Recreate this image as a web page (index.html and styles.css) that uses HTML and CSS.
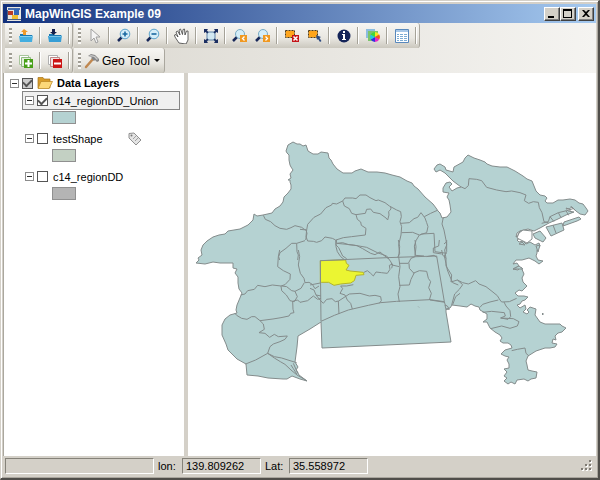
FILE: index.html
```html
<!DOCTYPE html>
<html lang="en">
<head>
<meta charset="utf-8">
<title>MapWinGIS Example 09</title>
<link rel="stylesheet" href="styles.css">
</head>
<body>
<div class="window">
  <header class="titlebar">
    <svg class="app-icon" viewBox="0 0 14 14" aria-hidden="true"><path fill="#e8e6e0" d="M0 0h14v14H0z"/><path fill="#4a70b0" d="M1 1h12v2H1z"/><path fill="#b83c28" d="M1 4h5v4H1z"/><path fill="#3468b8" d="M7 2h5v6H7z"/><path fill="#f0c030" d="M5 8h6v4H5z"/><path fill="#486080" d="M0 12h14v1H0zM0 3h1v10H0z"/></svg>
    <h1 class="title">MapWinGIS Example 09</h1>
    <div class="caption-buttons">
      <button class="caption" aria-label="Minimize"><svg viewBox="0 0 12 10"><path d="M2 7h6v2H2z"/></svg></button>
      <button class="caption" aria-label="Maximize"><svg viewBox="0 0 12 10"><path fill-rule="evenodd" d="M1 0h9v9H1zM2 2v6h7V2z"/></svg></button>
      <button class="caption close" aria-label="Close"><svg viewBox="0 0 12 10"><path d="M2 1h2l2 2 2-2h2L7 4.500l3 3.500H8L6 6 4 8H2l3-3.500z"/></svg></button>
    </div>
  </header>

  <div class="toolbars">
    <div class="toolrow">
      <div class="strip" role="toolbar" aria-label="Project">
        <span class="grip"></span>
        <button class="tool" aria-label="Open"><svg viewBox="0 0 16 16"><path fill="#1879b4" d="M2 6h5l1 1h6v7H2z"/><path fill="#43aee0" d="M1 8h13l1-1-1 7H2z"/><path fill="#86d0f0" d="M2 8h12v1H2z"/><path fill="#f09a28" d="m6 1 4 3H8v3H5V4H3z"/></svg></button>
        <span class="sep"></span>
        <button class="tool" aria-label="Save"><svg viewBox="0 0 16 16"><path fill="#1879b4" d="M2 6h5l1 1h6v7H2z"/><path fill="#369ed6" d="M1 8h13l1-1-1 7H2z"/><path fill="#78c4e8" d="M2 8h12v1H2z"/><path fill="#14204c" d="M5 1h3v3h2L6.500 7 3 4h2z"/></svg></button>
        <span class="sep"></span>
      </div>
      <div class="strip" role="toolbar" aria-label="Map">
        <span class="grip"></span>
        <button class="tool" aria-label="Select"><svg viewBox="0 0 16 16"><path fill="#f4f4f4" stroke="#a0a0a0" d="M4 1v12l3-3 2 5 2-1-2-5h4z"/></svg></button>
        <span class="sep"></span>
        <button class="tool" aria-label="Zoom in"><svg viewBox="0 0 16 16"><path stroke="#182858" stroke-width="2.500" d="m6 9-4 4"/><circle cx="9" cy="6" r="4.800" fill="#d4edf8" stroke="#5ca4cc"/><path stroke="#1868a0" stroke-width="1.600" d="M6.500 6h5M9 3.500v5"/></svg></button>
        <span class="sep"></span>
        <button class="tool" aria-label="Zoom out"><svg viewBox="0 0 16 16"><path stroke="#182858" stroke-width="2.500" d="m6 9-4 4"/><circle cx="9" cy="6" r="4.800" fill="#d4edf8" stroke="#5ca4cc"/><path stroke="#1868a0" stroke-width="1.600" d="M6.500 6h5"/></svg></button>
        <span class="sep"></span>
        <button class="tool" aria-label="Pan"><svg viewBox="0 0 16 16"><path fill="#fff" stroke="#404040" stroke-width=".8" d="M5 15 1 9l-.5-2 1.500-.5L4 9 2 4l1.500-1L6 7 5 2l1.500-1L8.500 6.500 9 1.500l1.500-.5.5 6 1.500-4h1.500v9l-2 4z"/></svg></button>
        <span class="sep"></span>
        <button class="tool" aria-label="Full extent"><svg viewBox="0 0 16 16"><path fill="#d2e8f2" stroke="#5f83a8" d="M4 4h8v8H4z"/><path fill="#1c2f62" d="M1 1h4L4 2.500l1.500 2-1 1-2-1.500L1 5zM15 1v4l-1.500-1-2 1.500-1-1 1.500-2L11 1zM1 15v-4l1.500 1 2-1.500 1 1-1.500 2L5 15zM15 15h-4l1-1.500-1.500-2 1-1 2 1.500 1.500-1z"/></svg></button>
        <span class="sep"></span>
        <button class="tool" aria-label="Previous extent"><svg viewBox="0 0 16 16"><path stroke="#182858" stroke-width="2.500" d="m5 9-4 4"/><circle cx="8" cy="6" r="4.500" fill="#d4edf8" stroke="#78aac4"/><path fill="#f09820" d="M8 7h7v7H8z"/><path fill="none" stroke="#fff" stroke-width="1.300" d="m12.500 8.500-2 2 2 2"/></svg></button>
        <button class="tool" aria-label="Next extent"><svg viewBox="0 0 16 16"><path stroke="#182858" stroke-width="2.500" d="m5 9-4 4"/><circle cx="8" cy="6" r="4.500" fill="#d4edf8" stroke="#78aac4"/><path fill="#f09820" d="M8 7h7v7H8z"/><path fill="none" stroke="#fff" stroke-width="1.300" d="m10.500 8.500 2 2-2 2"/></svg></button>
        <span class="sep"></span>
        <button class="tool" aria-label="Clear selection"><svg viewBox="0 0 16 16"><path fill="#ffa51c" stroke="#4c3c20" stroke-dasharray="2 1" d="M1.500 2.500h9v7h-9z"/><path fill="#c41418" d="M8 7h7v7H8z"/><path stroke="#fff" stroke-width="1.500" d="m9.500 8.500 4 4m0-4-4 4"/></svg></button>
        <button class="tool" aria-label="Select shapes"><svg viewBox="0 0 16 16"><path fill="#ffa51c" stroke="#4c3c20" stroke-dasharray="2 1" d="M1.500 2.500h9v7h-9z"/><path fill="#2c4a80" d="m9 7 5 2-1.500 1 2 3-1.500 1-2-3-1 1z"/></svg></button>
        <span class="sep"></span>
        <button class="tool" aria-label="Identify"><svg viewBox="0 0 16 16"><circle cx="8" cy="8" r="6.500" fill="#142458"/><path fill="#fff" d="M7 3h2v2H7zM6 6h3v5h1v1H6v-1h1V7H6z"/></svg></button>
        <span class="sep"></span>
        <button class="tool" aria-label="Symbology"><svg viewBox="0 0 16 16"><path fill="#8cbde0" d="M1 1h9v9H1z"/><path fill="#7cc46c" d="M3 3h10v10H3z"/><g transform="translate(10 9)"><path fill="#f8e820" d="M0 0V-5A5 5 0 0 1 4.300-2.500z"/><path fill="#f85020" d="M0 0 4.300-2.500A5 5 0 0 1 4.300 2.500z"/><path fill="#e828c8" d="M0 0 4.300 2.500A5 5 0 0 1 0 5z"/><path fill="#3030e0" d="M0 0v5a5 5 0 0 1-4.300-2.500z"/><path fill="#20c8e8" d="M0 0-4.300 2.500a5 5 0 0 1 0-5z"/><path fill="#40d838" d="M0 0-4.300-2.500A5 5 0 0 1 0-5z"/></g></svg></button>
        <span class="sep"></span>
        <button class="tool" aria-label="Attribute table"><svg viewBox="0 0 16 16"><path fill="#fff" stroke="#5888bc" d="M1.500 1.500h13v13h-13z"/><path fill="#a8c8e8" d="M2 2h12v2H2z"/><path stroke="#7cacd4" d="M3 6.500h10M3 8.500h10M3 10.500h10M3 12.500h10"/><path stroke="#fff" d="M5.500 5v9M9.500 5v9"/></svg></button>
        <span class="sep"></span>
      </div>
    </div>
    <div class="toolrow">
      <div class="strip" role="toolbar" aria-label="Layers">
        <span class="grip"></span>
        <button class="tool" aria-label="Add layer"><svg viewBox="0 0 16 16"><path fill="#fff" stroke="#a8c49c" d="M1.500 2.500h9v9h-9z"/><path fill="#e4eedd" stroke="#90b880" d="M3.500 4.500h9v9h-9z"/><path fill="#48a018" d="M6 6h9v9H6z"/><path stroke="#fff" stroke-width="2" d="M7 10.500h7M10.500 7v7"/></svg></button>
        <span class="sep"></span>
        <button class="tool" aria-label="Remove layer"><svg viewBox="0 0 16 16"><path fill="#fff" stroke="#b0b0b0" d="M1.500 2.500h9v9h-9z"/><path fill="#f0e4e4" stroke="#c08888" d="M3.500 4.500h9v9h-9z"/><path fill="#cc1414" d="M6 6h9v9H6z"/><path stroke="#fff" stroke-width="2" d="M7 10.500h7"/></svg></button>
        <span class="sep"></span>
      </div>
      <div class="strip" role="toolbar" aria-label="Geoprocessing">
        <span class="grip"></span>
        <button class="menu-tool"><svg class="hammer" viewBox="0 0 16 16"><path stroke="#c08850" stroke-width="2.500" stroke-linecap="round" d="m9 6-7 8"/><path fill="#858585" d="m4 3 3-2 4 1 4 4v2l-2 1-2-2-1 1-3-3 1-1z"/><path fill="#c8c8c8" d="m5 3 2-1 4 1 3 3-1 1-3-3z"/></svg>Geo Tool<span class="arrow"></span></button>
      </div>
    </div>
  </div>

  <main class="workspace">
    <aside class="legend">
      <div class="group">
        <button class="toggle" aria-label="Collapse Data Layers"></button>
        <input class="check mixed" type="checkbox" id="all" checked>
        <svg class="folder" viewBox="0 0 16 14" aria-hidden="true"><path fill="#d89c28" stroke="#a87418" stroke-width=".7" d="M1 3V1.500h5L7 3h6v9H1z"/><path fill="#fcd878" stroke="#b88420" stroke-width=".7" d="M4 5.500h11.500L12 12.500H1z"/></svg>
        <label for="all">Data Layers</label>
      </div>
      <ul class="layers">
        <li>
          <div class="layer selected"><button class="toggle" aria-label="Collapse layer"></button><input class="check" type="checkbox" id="l1" checked><label for="l1">c14_regionDD_Union</label></div>
          <span class="swatch water"></span>
        </li>
        <li>
          <div class="layer"><button class="toggle" aria-label="Collapse layer"></button><input class="check" type="checkbox" id="l2"><label for="l2">testShape</label>
            <svg class="tag" viewBox="0 0 14 14" aria-hidden="true"><path fill="#e4e4e4" stroke="#909090" d="M1 1.500 6 1l7 7-5 5-7-7z"/><path stroke="#a0a0a0" d="m5 7 3-3M7 9l3-3"/><circle cx="3.500" cy="3.500" r="1" fill="#777"/></svg></div>
          <span class="swatch sage"></span>
        </li>
        <li>
          <div class="layer"><button class="toggle" aria-label="Collapse layer"></button><input class="check" type="checkbox" id="l3"><label for="l3">c14_regionDD</label></div>
          <span class="swatch gray"></span>
        </li>
      </ul>
    </aside>
    <div class="splitter"></div>
    <section class="map" aria-label="Map">
      <svg viewBox="188 73 408 382" preserveAspectRatio="xMinYMin meet">
        <path class="land" d="M196 263L199 260 198 258 202 255 201 250 203 245 207 241 213 237 219 235 225 234 228 231 240 229 248 225 253 220 254 214 257 216 263 215 272 213 275 209 280 206 283 202 284 197 288 193 291 189 291 185 290 182 290 180 288 180 291 178 290 174 293 170 291 167 290 165 289 160 289 155 287 153 286 151 288 145 293 142 297 144 300 144 303 146 306 145 308 151 313 154 318 154 321 152 328 153 329 158 331 160 333 164 337 169 343 173 352 173 355 171 361 169 368 172 377 172 385 173 392 175 400 177 407 181 412 183 414 186 418 189 425 197 433 204 436 208 438 211 440 213 442 218 447 217 451 212 450 205 449 200 447 197 449 193 443 192 443 188 446 183 450 182 452 184 449 187 452 191 457 188 461 187 453 181 445 173 440 170 436 172 434 169 437 165 440 164 445 167 446 170 453 172 454 167 463 162 465 158 468 155 474 158 480 160 485 162 487 164 492 166 500 167 507 167 515 171 523 176 527 179 532 181 534 186 536 191 540 195 545 196 547 198 545 201 547 203 553 203 558 200 563 200 570 199 575 200 579 203 583 204 586 208 588 211 585 215 580 214 576 211 572 207 569 209 566 208 568 211 574 212 566 215 558 219 549 223 540 228 534 231 528 229 520 231 517 233 516 237 520 234 524 232 523 236 517 240 519 242 523 241 526 244 530 242 535 245 539 243 540 246 537 250 537 253 536 256 538 260 543 261 539 264 535 261 529 258 522 260 516 260 513 264 517 263 519 266 513 269 518 270 521 267 524 274 522 278 523 282 527 286 524 289 522 291 519 290 515 293 518 296 524 296 528 297 525 300 522 301 520 304 517 305 520 308 525 305 526 309 523 312 527 314 529 312 527 310 530 307 536 309 535 315 540 322 545 324 560 324 562 326 566 328 562 332 558 333 555 336 556 340 553 339 552 343 557 344 555 347 550 348 545 348 536 351 528 356 526 361 527 365 528 370 532 371 537 372 536 378 531 379 528 381 524 379 517 380 515 384 511 382 508 384 504 381 507 378 504 376 507 372 504 369 509 368 509 364 507 360 509 357 505 356 501 354 505 350 512 348 511 345 508 343 503 343 500 341 502 338 500 335 495 332 490 328 487 322 483 322 487 319 487 314 480 310 479 307 475 306 471 304 467 307 460 306 452 305 450 308 446 309 446 312 451 342 322 348 321 322 310 329 298 336 297 347 295 362 298 367 296 370 299 375 307 381 300 379 292 376 287 379 283 379 268 378 258 376 247 375 246 364 237 359 228 350 226 344 222 335 222 325 225 319 230 315 237 313 236 310 237 305 242 293 239 289 238 283 238 277 235 273 237 269 233 268 233 263 228 263 220 263 213 262 205 264z"/>
        <path class="land" d="M546 227L562 223 564 230 551 236zM553 225L556 233M564 222L579 217 581 219 577 221 563 226zM533 234L540 231 546 238 543 242 535 238zM520 231L526 232 523 236 518 235zM536 246L540 245 538 252zM519 244L522 242 525 245zM513 269L519 266 523 269zM542 314L543 313 543 315z"/>
        <path class="bay" d="M519 233L523 230 532 231 532 239 527 243 521 240 517 238z"/>
        <g transform="translate(185 130) scale(.333333)">
          <path class="border" d="M235 256L241 268 257 275 270 287 285 295 305 298 318 293 330 287 350 292 358 298 363 300 366 310 362 330M335 340L320 340 303 355 285 368 281 380 284 390M335 340L336 365 340 375 338 390M335 340L360 332"/>
        </g>
        <g transform="translate(300 130) scale(.333333)">
          <path class="border" d="M0 298L20 300 23 283 42 262 62 252 78 233 95 225 97 220 110 222 128 213 135 204 158 204 168 206 180 195 198 195 210 203 228 212 235 210 255 218 268 228 290 240 302 245 304 260 300 275 305 290 303 315 296 345 299 370 293 382M20 300L18 320 23 333 40 334 50 337 65 332 75 321 97 325 107 330 108 350 112 365 122 380 132 388M128 213L133 228 148 236 155 250 168 254 196 250 200 238 212 237 220 247 240 251 258 264 263 270 267 255 266 245 273 237 272 230M168 254L172 268 182 276 184 286 198 295 196 315 155 320 130 323 108 330M110 340L128 338 146 344 171 347 188 356 212 370 225 374 240 366 252 376 265 386M303 280L328 278 342 266 353 262 363 248 375 264 380 278 384 290 380 308 358 315 338 307 305 308M373 260L392 250 412 241M360 315L365 312 402 310 405 365 440 370M358 315L348 332 343 348 346 376 372 378M430 262L426 282 432 300 438 330 440 345 434 360 438 385M440 335L432 342"/>
        </g>
        <g transform="translate(420 140) scale(.333333)">
          <path class="border" d="M122 140L135 146 145 137 147 116 170 118 185 122 200 142 230 150 258 155 275 153 300 158 318 165 313 182 326 190 340 185 355 187 358 203 366 218 372 245 385 248M365 250L385 245 390 230 415 218 440 212 462 205M390 230L402 245M415 218L423 233M438 212L446 226M445 205L455 218M452 198L466 212"/>
        </g>
        <g transform="translate(185 250) scale(.333333)">
          <path class="border" d="M284 0L280 20 278 50 295 62 316 72 315 88 300 104 288 108 262 105 240 110 218 106 208 118 188 122 180 132 167 135M340 0L344 20 340 45 346 70 357 85 360 98 372 97 382 103 390 116 402 108M290 108L305 110 320 122 330 124 337 140 328 155 315 152 304 135 290 122 288 108M330 124L348 115 358 98M325 153L338 150 345 157 368 152 385 138 398 148 408 145M323 153L324 178 327 188 317 190 312 198 288 203 264 207 225 212 210 200 200 200 186 208 170 205 155 196 150 190M225 212L235 222 238 238 222 248 240 250 254 262 268 253 280 260 307 258 300 268 285 275 265 282 255 290 248 310 212 330 182 342M248 310L268 320 290 324 315 332 335 338M248 310L268 324 286 335 300 343 318 360 336 375 365 392M318 345L325 356 335 372M325 340L333 358 340 370"/>
        </g>
        <g transform="translate(310 240) scale(.333333)">
          <path class="selected-shape" d="M31 62L107 60 109 70 117 76 108 90 120 93 160 97 162 104 138 106 133 122 122 129 92 132 72 136 56 127 35 127 31 129z"/>
          <path class="border" d="M31 62L33 244M31 62L231 53 380 48 403 185 406 196M31 129L0 135M0 145L12 150 18 165 33 168M18 165L30 180 40 190 50 178 66 176 76 185 86 183 118 162 150 160 178 168 195 166 212 170 214 182 208 190M80 0L78 15 86 23 98 48 110 56M80 10L130 15 170 22 202 38 230 48 243 66 246 75M162 97L172 92 182 100 190 108 198 96 214 98 232 100 240 88 238 76 248 72 245 85M265 0L269 20 266 50 270 80 266 110 270 140 264 162 268 186M315 0L318 20 315 50M246 75L268 80M268 70L295 70 303 55 315 50M297 70L298 85 312 100 303 118 298 135 268 136M309 100L328 92 350 94 355 115 362 125 356 143 364 160 358 180M130 134L110 138 92 138M92 138L98 146 90 160 105 165 112 180 122 190 127 207M85 183L87 222M33 244L73 226 115 210 175 196 212 188 260 184 360 179 403 185M388 0L386 18 370 24 370 38 395 42M350 50L372 46 380 52M410 0L410 35 403 48 408 70 412 90 420 110 428 128 445 135M450 160L437 170 428 194"/>
          <path class="border" d="M405 195L408 208 418 208 412 198zM325 200L327 202"/>
        </g>
        <g transform="translate(430 250) scale(.333333)">
          <path class="border" d="M35 0L38 15 48 25 48 48 65 75 63 96 82 90 98 104 88 118 74 132 65 165M82 90L98 98 115 102 137 92 147 102 168 110 186 124 202 137 210 150 215 156 238 155 260 145M150 172L158 163 180 156 205 150M158 187L185 184 223 188 226 198 212 204 234 208 242 200 240 182 228 168 222 156M212 204L250 206 267 215 262 228 240 235 215 228 182 236M245 302L262 298 285 294 288 310 297 318M0 150L45 157"/>
        </g>
      </svg>
    </section>
  </main>

  <footer class="status">
    <span class="panel message"></span>
    <label for="lon">lon:</label><output class="panel" id="lon">139.809262</output>
    <label for="lat">Lat:</label><output class="panel" id="lat">35.558972</output>
    <svg class="resize" viewBox="0 0 12 12" aria-hidden="true"><path fill="#fff" d="M9 1h2v2H9zM9 5h2v2H9zM5 5h2v2H5zM9 9h2v2H9zM5 9h2v2H5zM1 9h2v2H1z"/><path fill="#807c74" d="M8 0h2v2H8zM8 4h2v2H8zM4 4h2v2H4zM8 8h2v2H8zM4 8h2v2H4zM0 8h2v2H0z"/></svg>
  </footer>
</div>
</body>
</html>
```
FILE: styles.css
```css
* { box-sizing: border-box; }

body {
  margin: 0;
  background: #d4d0c8;
  color: #000;
  font: 11px/14px "Liberation Sans", Arial, sans-serif;
}

button { padding: 0; border: 0; background: none; color: inherit; font: inherit; }
svg { display: block; fill: none; }

.window {
  display: flex;
  flex-direction: column;
  min-height: 100vh;
  padding: 2px;
  border: 1px solid #d4d0c8;
  border-right: 2px solid #504e4a;
  border-bottom: 2px solid #504e4a;
  box-shadow: inset 1px 1px #fff, inset -1px -1px #aaa69e;
}

.titlebar {
  display: flex;
  align-items: center;
  gap: 4px;
  height: 20px;
  padding: 0 2px 0 4px;
  border-top: 1px solid #d4d0c8;
  background: linear-gradient(90deg, #12307c, #a6caf0);
}
.app-icon { width: 14px; height: 14px; }
.title { flex: 1; margin: 0; color: #fff; font-size: 12px; line-height: 16px; }
.caption-buttons { display: flex; }
.caption {
  display: grid;
  place-items: center;
  width: 16px;
  height: 14px;
  border: 1px solid;
  border-color: #fff #404040 #404040 #fff;
  background: #d4d0c8;
  box-shadow: inset -1px -1px #808080;
}
.caption svg { width: 12px; height: 10px; fill: #000; }
.close { margin-left: 2px; }

.toolbars { background: linear-gradient(90deg, #d8d5cd, #f5f4f1); }
.toolrow { display: flex; gap: 1px; height: 25px; padding-left: 2px; }
.strip {
  display: flex;
  align-items: center;
  border-radius: 0 3px 3px 0;
  background: linear-gradient(#f7f6f3, #e9e7e1 60%, #cbc8be);
  border-right: 1px solid #aaa79e;
}
.grip {
  width: 3px;
  height: 16px;
  margin: 0 2px 0 4px;
  background: repeating-linear-gradient(#a09d94 0 2px, #faf9f6 2px 4px);
}
.tool { display: grid; place-items: center; width: 23px; height: 23px; }
.tool svg, .hammer { width: 16px; height: 16px; }
.sep { width: 2px; height: 17px; margin: 0 2px; border-left: 1px solid #a5a298; border-right: 1px solid #fff; }
.menu-tool { display: flex; align-items: center; gap: 2px; height: 23px; padding: 0 4px 0 1px; font-size: 12px; }
.arrow { margin-left: 2px; border: 3px solid transparent; border-top-color: #000; border-bottom: 0; }

.workspace { display: flex; flex: 1; }
.legend { width: 181px; padding: 2px 4px 0 6px; border-left: 1px solid #aaa79e; background: #fff; }
.splitter { width: 4px; background: #d4d0c8; }
.map { flex: 1; background: #fff; }
.map svg { width: 100%; }

.group { display: flex; align-items: center; height: 16px; font-weight: bold; }
.folder { width: 16px; height: 14px; margin: 0 4px; }
.toggle {
  width: 9px;
  height: 9px;
  margin-right: 3px;
  border: 1px solid #8c8c8c;
  background: linear-gradient(#303030, #303030) center / 5px 1px no-repeat #fff;
}
.check {
  display: grid;
  place-items: center;
  width: 11px;
  height: 11px;
  margin: 0;
  border: 1px solid #555;
  background: #fff;
  appearance: none;
}
.check:checked::after {
  content: "";
  width: 7px;
  height: 4px;
  margin-bottom: 2px;
  border: solid #555;
  border-width: 0 0 2px 2px;
  transform: rotate(-45deg);
}
.mixed { background: #ccc; }
.layers { margin: 0; padding: 0 0 0 12px; list-style: none; }
.layer { display: flex; align-items: center; height: 19px; padding-left: 2px; border: 1px solid transparent; }
.layer label { margin-left: 5px; }
.selected { border-color: #858585; background: #f0f0f0; }
.tag { width: 14px; height: 14px; margin-left: 25px; }
.swatch { display: block; width: 24px; height: 13px; margin: 1px 0 5px 30px; border: 1px solid #909090; }
.water { background: #b5d2d2; }
.sage { background: #c3d0c3; }
.gray { background: #b4b4b4; }

.land { fill: #b5d2d2; stroke: #848c8c; stroke-width: 1; }
.bay { fill: #fff; stroke: #848c8c; stroke-width: 1; }
.border { stroke: #848c8c; stroke-width: 3; }
.selected-shape { fill: #ebf532; stroke: #b4b428; stroke-width: 3; }

.status { display: flex; align-items: center; gap: 4px; height: 20px; padding: 0 3px 0 2px; background: #d4d0c8; }
.panel {
  width: 79px;
  height: 16px;
  padding: 0 3px;
  border: 1px solid;
  border-color: #858279 #fff #fff #858279;
}
.message { width: 149px; }
.status label { width: 20px; }
.resize { width: 12px; height: 12px; margin-left: auto; }
```
